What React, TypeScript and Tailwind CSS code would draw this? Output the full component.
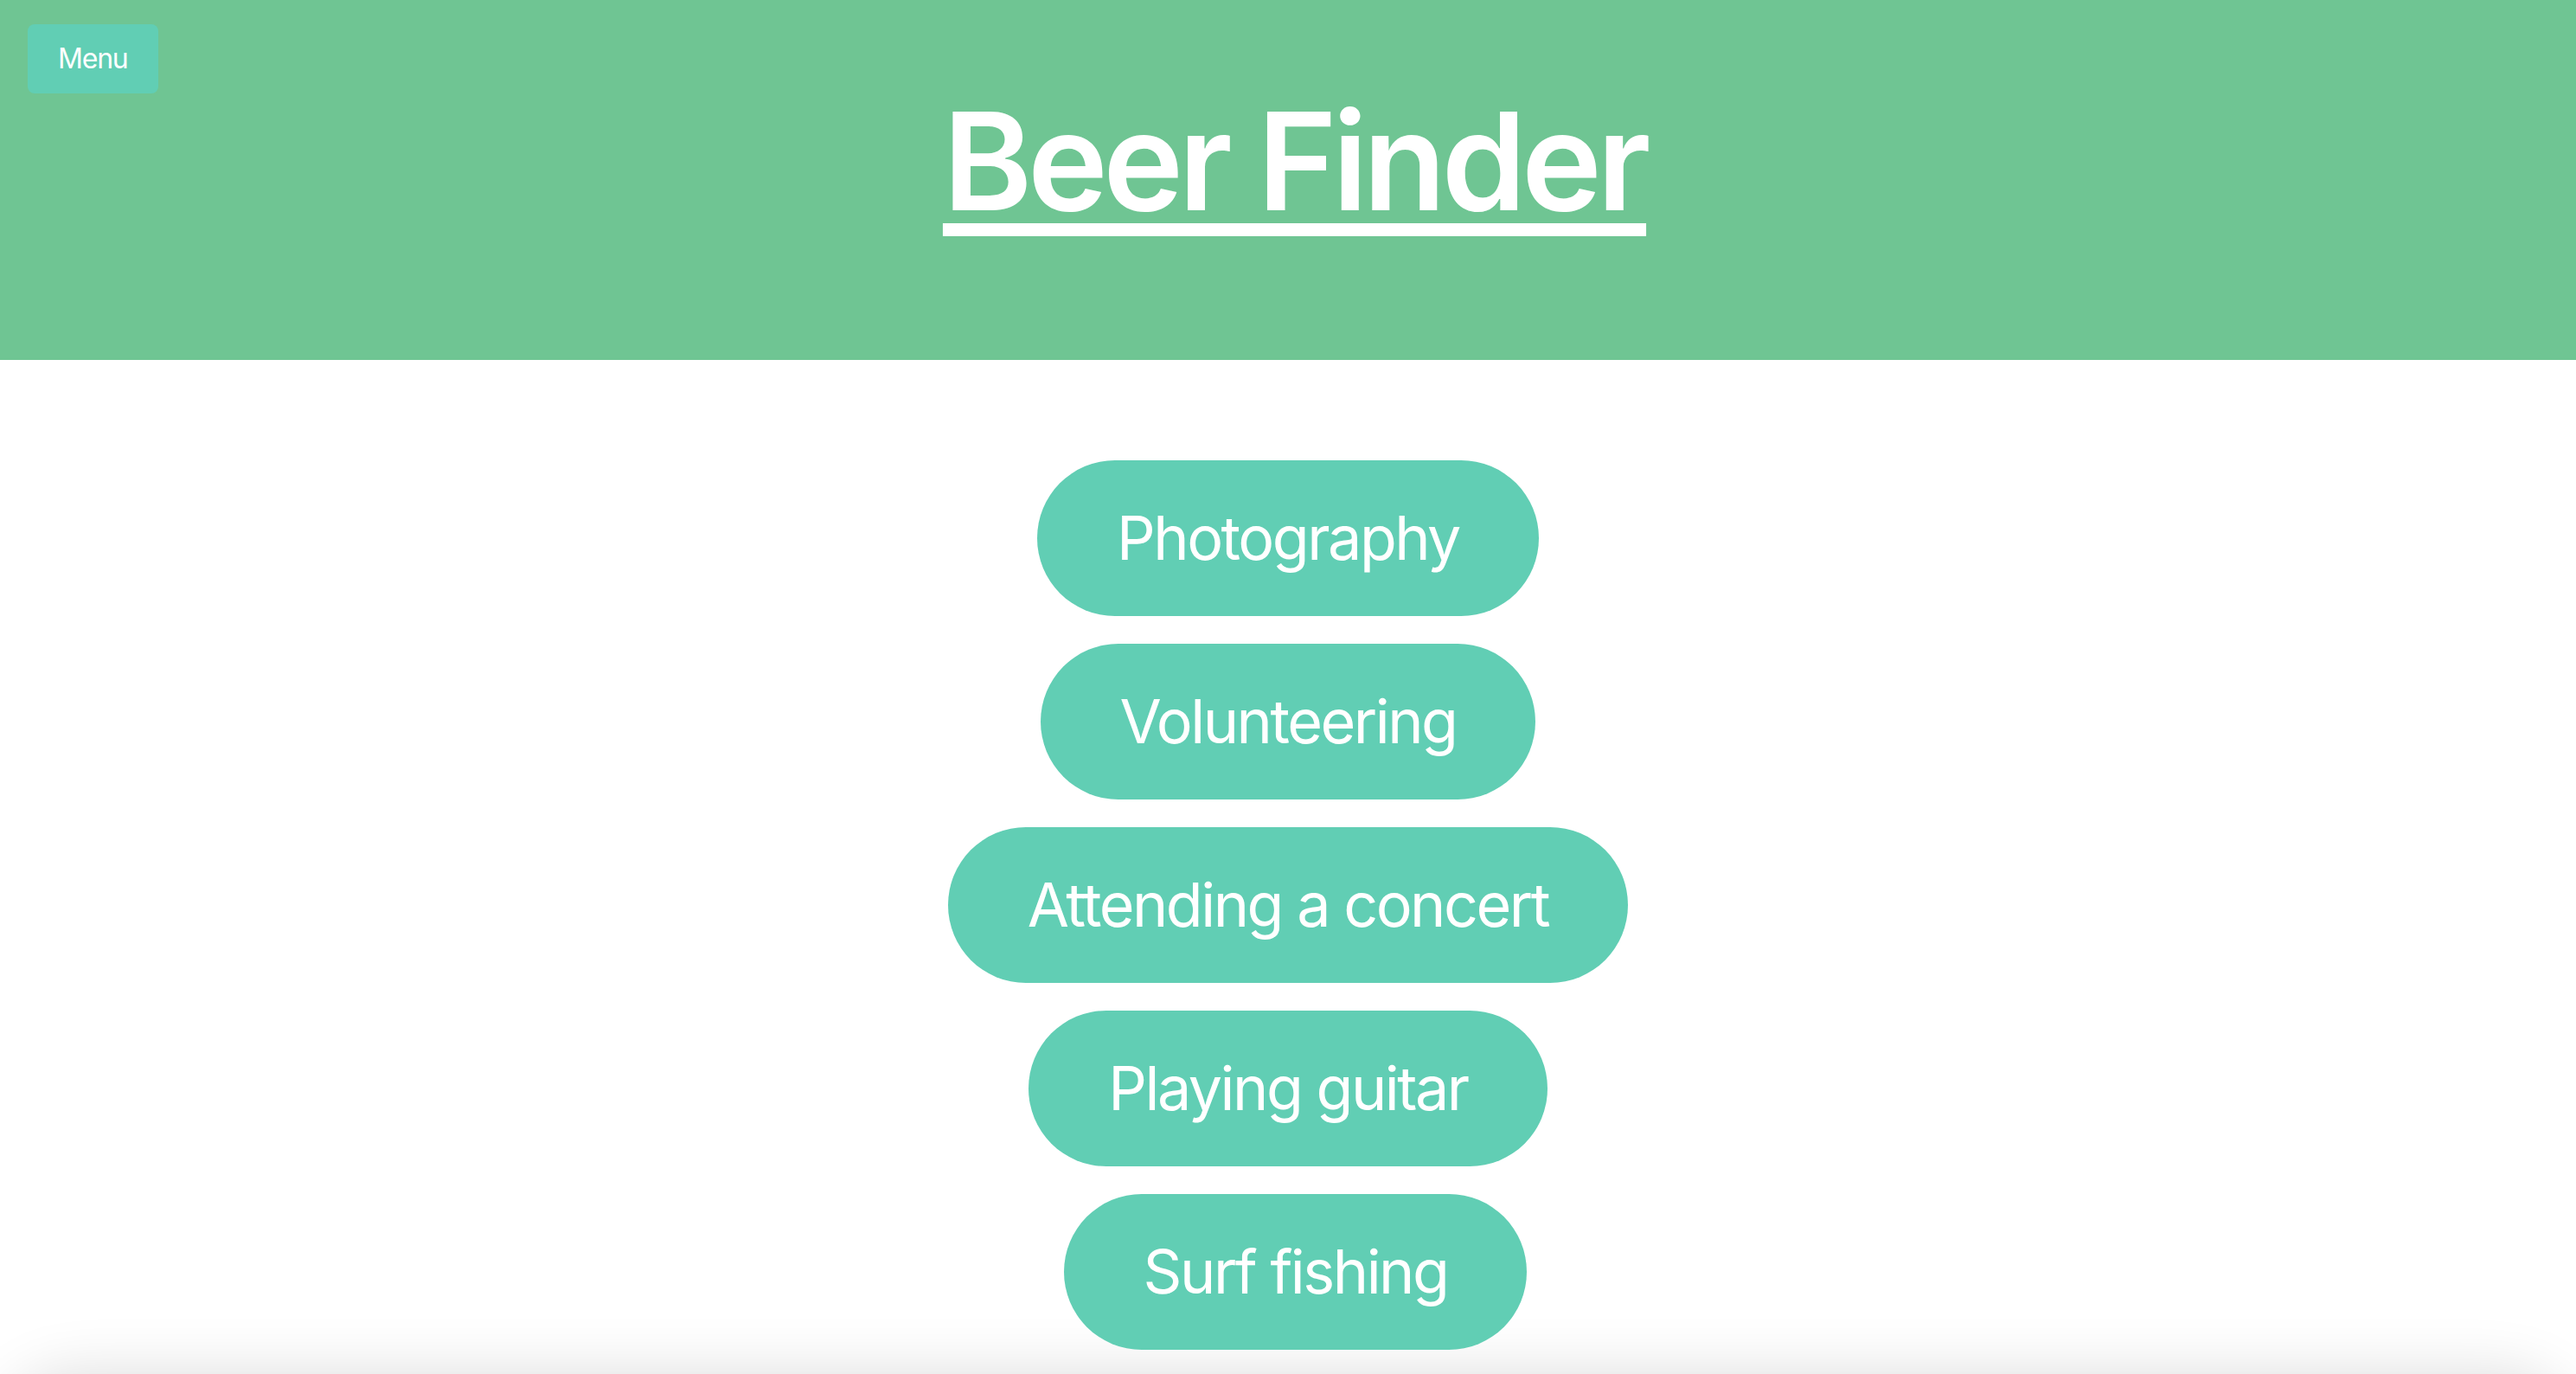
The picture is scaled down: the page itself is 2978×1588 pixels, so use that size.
import React from "react";

const items = [
  { t: "Photography", c: "" },
  { t: "Volunteering", c: "" },
  { t: "Attending a concert", c: "" },
  { t: "Playing guitar", c: "" },
  { t: "Surf fishing", c: "ml-[17px]" },
];

export default function App() {
  return (
    <div
      className="h-[1588px] overflow-hidden bg-white"
      style={{ fontFamily: "Inter, 'Noto Sans', 'Liberation Sans', sans-serif" }}
    >
      <header className="h-[416px] bg-[#6fc593] px-[32px] pt-[28px] grid grid-cols-[1fr_auto_1fr] items-start">
        <div>
          <button className="h-[80px] px-[35px] rounded-[8px] bg-[#61ceb4] text-white text-[32px] leading-none tracking-[-1.2px]">
            Menu
          </button>
        </div>
        <h1 className="mt-[63px] pl-[15px] text-white text-[157px] leading-[190px] font-semibold tracking-[-5.5px] underline decoration-[15px] underline-offset-[15px] [text-decoration-skip-ink:none]">
          Beer Finder
        </h1>
        <div />
      </header>
      <main className="pt-[116px] flex flex-col items-center gap-[32px]">
        {items.map(({ t, c }) => (
          <div
            key={t}
            className={`h-[180px] px-[92px] rounded-full bg-[#61ceb4] text-white text-[70px] leading-none tracking-[-2.5px] flex items-center ${c}`}
          >
            {t}
          </div>
        ))}
      </main>
      <div className="mt-[29px] h-[200px] mx-[4px] rounded-t-[80px] bg-white shadow-[0_0_70px_rgba(0,0,0,0.14)]" />
    </div>
  );
}
